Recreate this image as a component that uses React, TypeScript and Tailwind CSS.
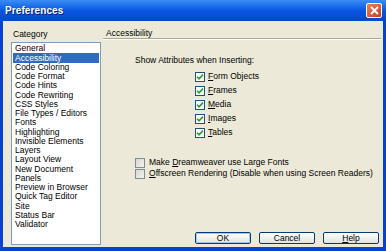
import React from "react";

const items = [
  "General",
  "Accessibility",
  "Code Coloring",
  "Code Format",
  "Code Hints",
  "Code Rewriting",
  "CSS Styles",
  "File Types / Editors",
  "Fonts",
  "Highlighting",
  "Invisible Elements",
  "Layers",
  "Layout View",
  "New Document",
  "Panels",
  "Preview in Browser",
  "Quick Tag Editor",
  "Site",
  "Status Bar",
  "Validator",
];

function Check({ checked }: { checked: boolean }) {
  return (
    <div
      className={
        "w-[10px] h-[10px] border flex items-center justify-center shrink-0 " +
        (checked ? "bg-white border-[#1c5180]" : "bg-gradient-to-br from-[#d8d8cf] to-[#f3f3ee] border-[#7f8c99]")
      }
    >
      {checked && (
        <svg width="8" height="8" viewBox="0 0 8 8">
          <path d="M1 3.8 L3 5.8 L7 1.6" stroke="#21a121" strokeWidth="1.6" fill="none" />
        </svg>
      )}
    </div>
  );
}

function U({ c }: { c: string }) {
  return <span className="underline underline-offset-[1px]">{c}</span>;
}

function Btn({ children, focus }: { children: React.ReactNode; focus?: boolean }) {
  return (
    <div className="w-[56px] h-[12px] rounded-[2px] border border-[#003c74] bg-gradient-to-b from-white to-[#e3e3db] flex items-center justify-center">
      <div
        className={
          "w-full h-full flex items-center justify-center rounded-[1px] " +
          (focus ? "border border-[#a8c4f0]" : "")
        }
      >
        {children}
      </div>
    </div>
  );
}

export default function App() {
  return (
    <div
      className="w-[386px] h-[251px] bg-[#0842d0] flex flex-col text-black text-[8px] leading-none"
      style={{ fontFamily: '"Liberation Sans", Arial, sans-serif' }}
    >
      <div className="h-[21px] shrink-0 bg-gradient-to-b from-[#3b8cf5] via-[#0757e3] to-[#0846c4] flex items-center justify-between pl-[5px] pr-[4px]">
        <span className="text-white font-bold text-[10px] tracking-[0.1px] [text-shadow:1px_1px_0_#0a1f7a]">
          Preferences
        </span>
        <div className="w-[16px] h-[15px] rounded-[2px] border border-white bg-gradient-to-br from-[#e97e5f] to-[#c6401f] flex items-center justify-center">
          <svg width="9" height="9" viewBox="0 0 9 9">
            <path d="M1 1 L8 8 M8 1 L1 8" stroke="white" strokeWidth="1.8" />
          </svg>
        </div>
      </div>
      <div className="flex-1 mx-[3px] mb-[4px] bg-[#ece9d8] flex">
        <div className="w-[98px] pl-[8px] flex flex-col">
          <div className="h-[21px] pl-[2px] flex items-end pb-[4px] text-[8.5px]">Category</div>
          <div className="flex-1 mb-[2px] bg-white border border-[#7f9db9] pt-[1px] flex flex-col">
            {items.map((it, i) => (
              <div
                key={it}
                className={
                  "h-[9.25px] flex items-center pl-[2px] mx-[1px] text-[8.5px] " +
                  (i === 1 ? "bg-[#316ac5] text-white" : "")
                }
              >
                {it}
              </div>
            ))}
          </div>
        </div>
        <div className="flex-1 flex flex-col pl-[2px] pr-[2px]">
          <div className="h-[17px] pl-[3px] flex items-end pb-[1px] text-[8.5px]">Accessibility</div>
          <div className="h-[2px] border-t border-[#aca899] border-b border-b-white" />
          <div className="pl-[32px] pt-[16px] text-[8.5px]">Show Attributes when Inserting:</div>
          <div className="pl-[92px] pt-[7px] flex flex-col gap-[4px] text-[8.5px]">
            <div className="flex items-center gap-[3px] h-[10px]"><Check checked /><span><U c="F" />orm Objects</span></div>
            <div className="flex items-center gap-[3px] h-[10px]"><Check checked /><span><U c="F" />rames</span></div>
            <div className="flex items-center gap-[3px] h-[10px]"><Check checked /><span><U c="M" />edia</span></div>
            <div className="flex items-center gap-[3px] h-[10px]"><Check checked /><span><U c="I" />mages</span></div>
            <div className="flex items-center gap-[3px] h-[10px]"><Check checked /><span><U c="T" />ables</span></div>
          </div>
          <div className="pl-[32px] pt-[20px] flex flex-col gap-[1px] text-[8.5px]">
            <div className="flex items-center gap-[4px] h-[10px]"><Check checked={false} /><span>Make <U c="D" />reamweaver use Large Fonts</span></div>
            <div className="flex items-center gap-[4px] h-[10px]"><Check checked={false} /><span><U c="O" />ffscreen Rendering (Disable when using Screen Readers)</span></div>
          </div>
          <div className="flex-1" />
          <div className="flex justify-end gap-[8px] pr-[2px] pb-[3px] text-[8.5px]">
            <Btn focus>OK</Btn>
            <Btn>Cancel</Btn>
            <Btn><span><U c="H" />elp</span></Btn>
          </div>
        </div>
      </div>
    </div>
  );
}
